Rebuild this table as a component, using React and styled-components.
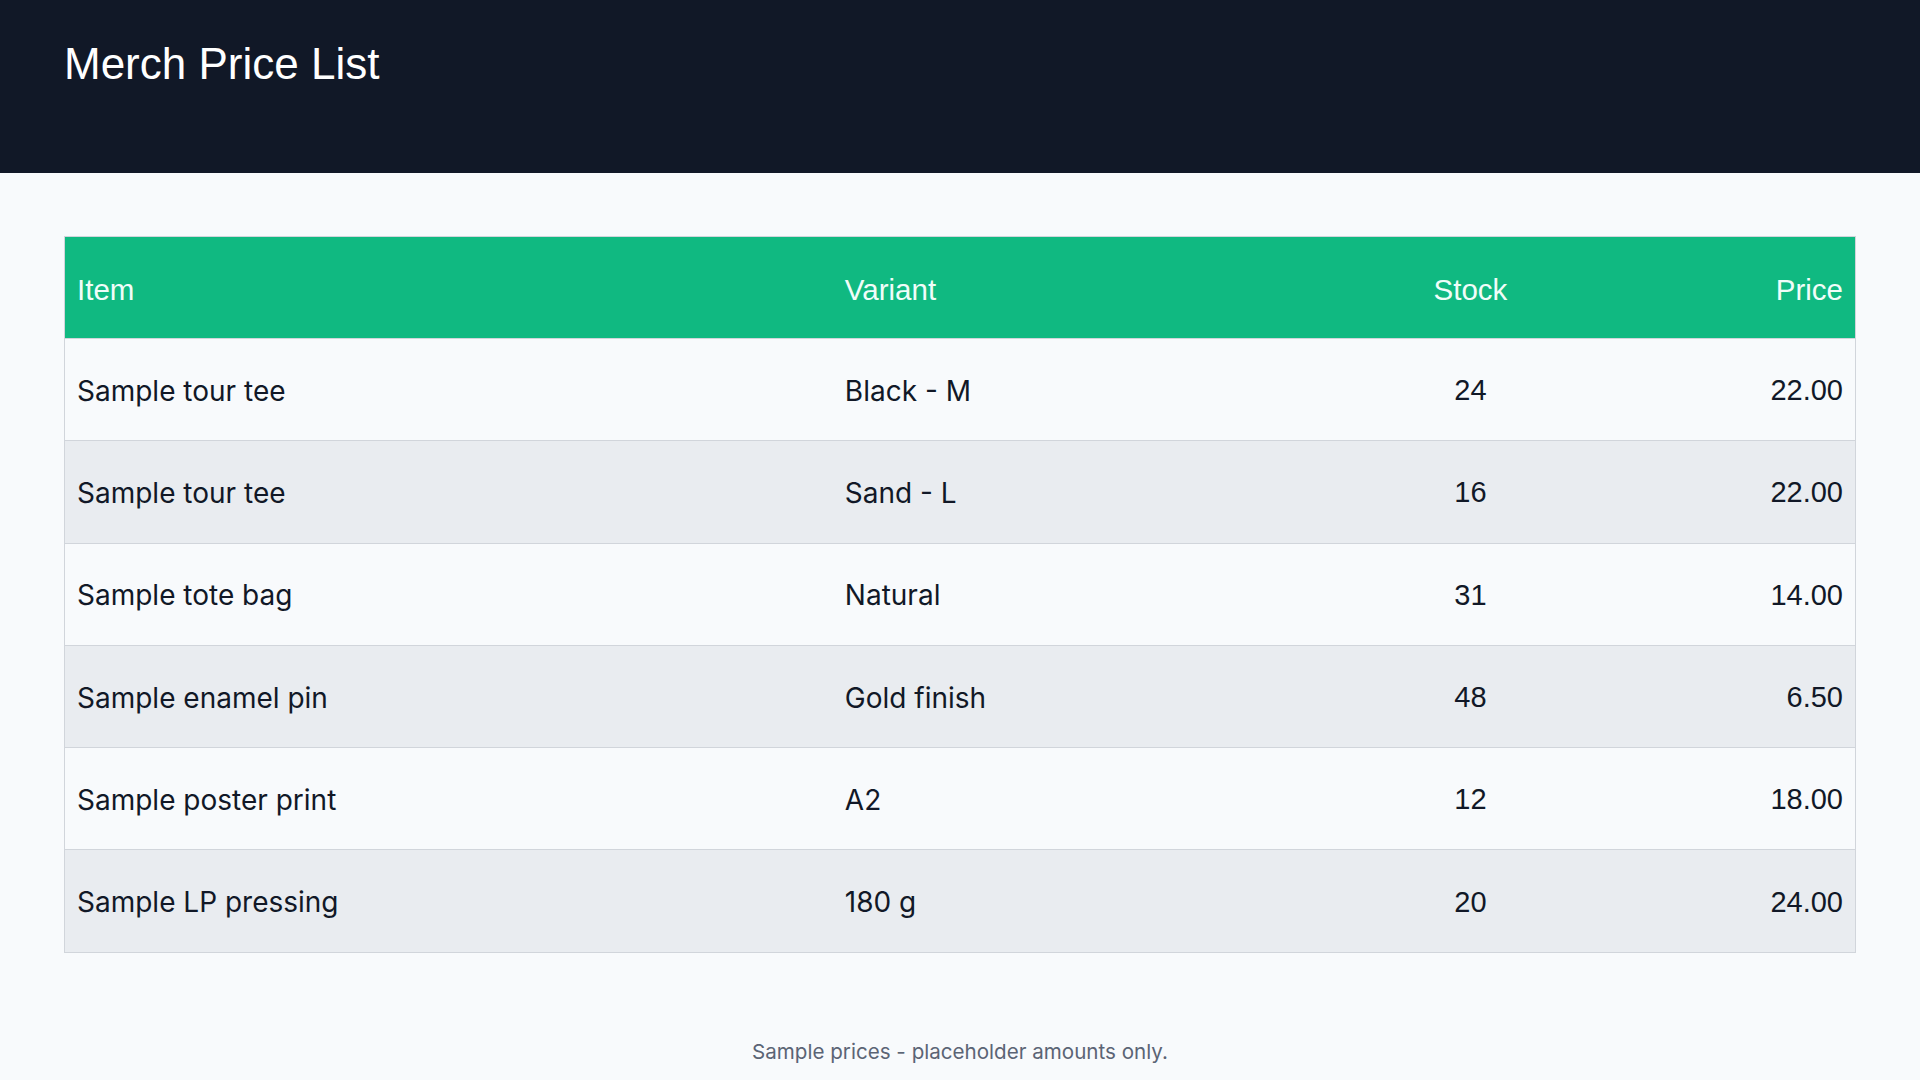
import React from "react";
import styled, { createGlobalStyle } from "styled-components";

const GlobalStyle = createGlobalStyle`
  html, body {
    margin: 0;
    padding: 0;
    background: #f8fafc;
  }
  body {
    font-family: "Liberation Sans", Arial, sans-serif;
    color: #111827;
  }
  * { box-sizing: border-box; }
`;

const Page = styled.div`
  min-height: 1080px;
  background: #f8fafc;
`;

const TopBar = styled.header`
  height: 173px;
  background: #111827;
  padding: 37px 64px 0;
`;

const Title = styled.h1`
  margin: 0;
  font-family: "Liberation Sans", Arial, sans-serif;
  font-weight: 400;
  font-size: 44px;
  line-height: 53px;
  color: #ffffff;
`;

const Main = styled.main`
  padding: 63px 64px 0;
`;

const Table = styled.table`
  width: 100%;
  border-collapse: collapse;
  table-layout: fixed;
  border: 1px solid #d1d5db;
`;

const HeadCell = styled.th`
  height: 102px;
  padding: 4px 12px 0;
  background: #10b981;
  color: #f0fdf9;
  font-family: "Liberation Sans", Arial, sans-serif;
  font-weight: 400;
  font-size: 29.5px;
  text-align: ${(p) => p.$align || "left"};
`;

const Row = styled.tr`
  background: ${(p) => (p.$alt ? "#e9ecf0" : "#f8fafc")};
  border-top: 1px solid #d1d5db;
`;

const Cell = styled.td`
  height: 102.3px;
  padding: 2px 12px 0;
  font-family: ${(p) =>
    p.$num ? `"Liberation Sans", Arial, sans-serif` : `Inter, "Liberation Sans", sans-serif`};
  font-size: ${(p) => (p.$num ? "29px" : "28px")};
  color: #111827;
  text-align: ${(p) => p.$align || "left"};
`;

const Footer = styled.p`
  margin: 87px 0 0;
  text-align: center;
  font-family: Inter, "Liberation Sans", sans-serif;
  font-size: 20.6px;
  line-height: 24px;
  color: #5b6475;
`;

const rows = [
  ["Sample tour tee", "Black - M", "24", "22.00"],
  ["Sample tour tee", "Sand - L", "16", "22.00"],
  ["Sample tote bag", "Natural", "31", "14.00"],
  ["Sample enamel pin", "Gold finish", "48", "6.50"],
  ["Sample poster print", "A2", "12", "18.00"],
  ["Sample LP pressing", "180 g", "20", "24.00"],
];

export default function App() {
  return (
    <Page>
      <GlobalStyle />
      <TopBar>
        <Title>Merch Price List</Title>
      </TopBar>
      <Main>
        <Table>
          <colgroup>
            <col style={{ width: "42.9%" }} />
            <col style={{ width: "25.1%" }} />
            <col style={{ width: "21%" }} />
            <col style={{ width: "11%" }} />
          </colgroup>
          <thead>
            <tr>
              <HeadCell>Item</HeadCell>
              <HeadCell>Variant</HeadCell>
              <HeadCell $align="center">Stock</HeadCell>
              <HeadCell $align="right">Price</HeadCell>
            </tr>
          </thead>
          <tbody>
            {rows.map((r, i) => (
              <Row key={i} $alt={i % 2 === 1}>
                <Cell>{r[0]}</Cell>
                <Cell>{r[1]}</Cell>
                <Cell $num $align="center">{r[2]}</Cell>
                <Cell $num $align="right">{r[3]}</Cell>
              </Row>
            ))}
          </tbody>
        </Table>
        <Footer>Sample prices - placeholder amounts only.</Footer>
      </Main>
    </Page>
  );
}
